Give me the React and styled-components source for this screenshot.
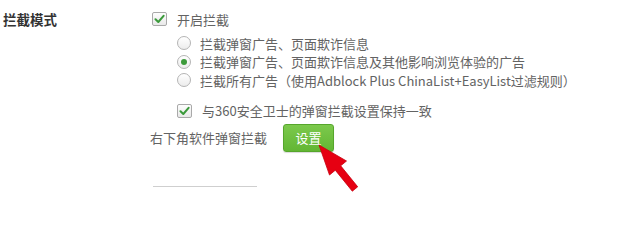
import React from "react";
import styled, { createGlobalStyle } from "styled-components";

const Global = createGlobalStyle`
  html, body { margin: 0; padding: 0; background: #fff; }
  body { font-family: "Noto Sans CJK SC", "Microsoft YaHei", sans-serif; }
`;

const Page = styled.div`
  position: relative;
  width: 628px;
  height: 246px;
  overflow: hidden;
  background: #fff;
`;

const Section = styled.div`
  display: grid;
  grid-template-columns: 150px 1fr;
  padding-top: 10px;
`;

const Label = styled.div`
  padding-left: 3px;
  font-size: 13.5px;
  font-weight: 600;
  line-height: 18px;
  color: #333;
`;

const Content = styled.div`
  display: flex;
  flex-direction: column;
`;

const Row = styled.label`
  display: flex;
  align-items: center;
  height: ${(p) => p.$h || 18}px;
  margin-left: ${(p) => p.$indent || 0}px;
  margin-top: ${(p) => p.$top || 0}px;
  gap: ${(p) => p.$gap || 9}px;
  font-size: 13px;
  color: #636363;
  white-space: nowrap;
`;

const Box = styled.span`
  box-sizing: border-box;
  width: 15px;
  height: 14px;
  border: 1px solid #a9a9a9;
  border-radius: 2px;
  background: linear-gradient(#fdfdfd, #e9e9e9);
  display: flex;
  align-items: center;
  justify-content: center;
  flex: none;
`;

const Radio = styled.span`
  box-sizing: border-box;
  width: 14px;
  height: 14px;
  border-radius: 50%;
  border: 1px solid #b4b4b4;
  background: linear-gradient(#ffffff, #ececec);
  display: flex;
  align-items: center;
  justify-content: center;
  flex: none;
  &::after {
    content: "";
    width: 6px;
    height: 6px;
    border-radius: 50%;
    background: ${(p) => (p.$on ? "#3c9a3a" : "transparent")};
  }
`;

const RadioGroup = styled.div`
  display: flex;
  flex-direction: column;
  margin-top: 6px;
`;

const BottomRow = styled.div`
  display: flex;
  align-items: center;
  gap: 16px;
  margin-top: 4px;
  font-size: 13px;
  color: #636363;
`;

const Button = styled.button`
  width: 51px;
  height: 28px;
  border: 1px solid #56a62c;
  border-radius: 3px;
  background: linear-gradient(#7cc94c, #62b634);
  color: #fff;
  font-family: inherit;
  font-size: 13px;
  padding: 0;
  box-shadow: 0 1px 1px rgba(0, 0, 0, 0.15);
`;

const Divider = styled.div`
  width: 104px;
  height: 1px;
  background: #cfcfcf;
  margin-top: 34px;
  margin-left: 3px;
`;

const ArrowSvg = styled.svg`
  position: absolute;
  left: 0;
  top: 0;
  pointer-events: none;
`;

const Check = () => (
  <svg width="11" height="10" viewBox="0 0 11 10">
    <path d="M1.5 5.2 L4.3 8 L9.6 1.8" fill="none" stroke="#3b9a3b" strokeWidth="2" strokeLinecap="round" strokeLinejoin="round" />
  </svg>
);

export default function App() {
  return (
    <Page>
      <Global />
      <Section>
        <Label>拦截模式</Label>
        <Content>
          <Row $indent={2} $gap={10}>
            <Box><Check /></Box>
            开启拦截
          </Row>
          <RadioGroup>
            <Row $indent={27} $h={18.5}>
              <Radio />
              拦截弹窗广告、页面欺诈信息
            </Row>
            <Row $indent={27} $h={18.5}>
              <Radio $on />
              拦截弹窗广告、页面欺诈信息及其他影响浏览体验的广告
            </Row>
            <Row $indent={27} $h={18.5}>
              <Radio />
              拦截所有广告（使用Adblock Plus ChinaList+EasyList过滤规则）
            </Row>
          </RadioGroup>
          <Row $indent={27} $top={12} $gap={10}>
            <Box><Check /></Box>
            与360安全卫士的弹窗拦截设置保持一致
          </Row>
          <BottomRow>
            右下角软件弹窗拦截
            <Button>设置</Button>
          </BottomRow>
          <Divider />
        </Content>
      </Section>
      <ArrowSvg width="628" height="246" viewBox="0 0 628 246">
        <polygon
          points="319,145 346.5,161 340.7,165.8 357.7,186.8 352.3,191.2 335.3,170.2 329.5,175"
          fill="#e60012"
          stroke="#c8000f"
          strokeWidth="0.8"
          strokeLinejoin="round"
        />
      </ArrowSvg>
    </Page>
  );
}
